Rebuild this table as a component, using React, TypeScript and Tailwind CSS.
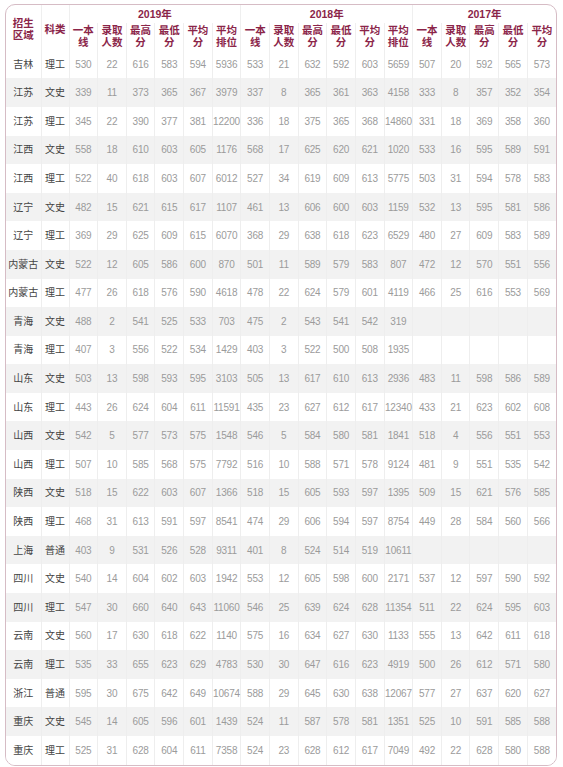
const FONT = '"Liberation Sans", "Noto Sans CJK SC", sans-serif'

type Row = [string, string, ...(number | null)[]]

const rows: Row[] = [
    ['吉林', '理工', 530, 22, 616, 583, 594, 5936, 533, 21, 632, 592, 603, 5659, 507, 20, 592, 565, 573],
    ['江苏', '文史', 339, 11, 373, 365, 367, 3979, 337, 8, 365, 361, 363, 4158, 333, 8, 357, 352, 354],
    ['江苏', '理工', 345, 22, 390, 377, 381, 12200, 336, 18, 375, 365, 368, 14860, 331, 18, 369, 358, 360],
    ['江西', '文史', 558, 18, 610, 603, 605, 1176, 568, 17, 625, 620, 621, 1020, 533, 16, 595, 589, 591],
    ['江西', '理工', 522, 40, 618, 603, 607, 6012, 527, 34, 619, 609, 613, 5775, 503, 31, 594, 578, 583],
    ['辽宁', '文史', 482, 15, 621, 615, 617, 1107, 461, 13, 606, 600, 603, 1159, 532, 13, 595, 581, 586],
    ['辽宁', '理工', 369, 29, 625, 609, 615, 6070, 368, 29, 638, 618, 623, 6529, 480, 27, 609, 583, 589],
    ['内蒙古', '文史', 522, 12, 605, 586, 600, 870, 501, 11, 589, 579, 583, 807, 472, 12, 570, 551, 556],
    ['内蒙古', '理工', 477, 26, 618, 576, 590, 4618, 478, 22, 624, 579, 601, 4119, 466, 25, 616, 553, 569],
    ['青海', '文史', 488, 2, 541, 525, 533, 703, 475, 2, 543, 541, 542, 319],
    ['青海', '理工', 407, 3, 556, 522, 534, 1429, 403, 3, 522, 500, 508, 1935],
    ['山东', '文史', 503, 13, 598, 593, 595, 3103, 505, 13, 617, 610, 613, 2936, 483, 11, 598, 586, 589],
    ['山东', '理工', 443, 26, 624, 604, 611, 11591, 435, 23, 627, 612, 617, 12340, 433, 21, 623, 602, 608],
    ['山西', '文史', 542, 5, 577, 573, 575, 1548, 546, 5, 584, 580, 581, 1841, 518, 4, 556, 551, 553],
    ['山西', '理工', 507, 10, 585, 568, 575, 7792, 516, 10, 588, 571, 578, 9124, 481, 9, 551, 535, 542],
    ['陕西', '文史', 518, 15, 622, 603, 607, 1366, 518, 15, 605, 593, 597, 1395, 509, 15, 621, 576, 585],
    ['陕西', '理工', 468, 31, 613, 591, 597, 8541, 474, 29, 606, 594, 597, 8754, 449, 28, 584, 560, 566],
    ['上海', '普通', 403, 9, 531, 526, 528, 9311, 401, 8, 524, 514, 519, 10611],
    ['四川', '文史', 540, 14, 604, 602, 603, 1942, 553, 12, 605, 598, 600, 2171, 537, 12, 597, 590, 592],
    ['四川', '理工', 547, 30, 660, 640, 643, 11060, 546, 25, 639, 624, 628, 11354, 511, 22, 624, 595, 603],
    ['云南', '文史', 560, 17, 630, 618, 622, 1140, 575, 16, 634, 627, 630, 1133, 555, 13, 642, 611, 618],
    ['云南', '理工', 535, 33, 655, 623, 629, 4783, 530, 30, 647, 616, 623, 4919, 500, 26, 612, 571, 580],
    ['浙江', '普通', 595, 30, 675, 642, 649, 10674, 588, 29, 645, 630, 638, 12067, 577, 27, 637, 620, 627],
    ['重庆', '文史', 545, 14, 605, 596, 601, 1439, 524, 11, 587, 578, 581, 1351, 525, 10, 591, 585, 588],
    ['重庆', '理工', 525, 31, 628, 604, 611, 7358, 524, 23, 628, 612, 617, 7049, 492, 22, 628, 580, 588],
]

// sub header labels, two lines each
const sub6 = [['一本', '线'], ['录取', '人数'], ['最高', '分'], ['最低', '分'], ['平均', '分'], ['平均', '排位']]
const subHeaders = [...sub6, ...sub6, ...sub6.slice(0, 5)]

function HeadCell({ lines }: { lines: string[] }) {
    return (
        <th className="border-l border-[#efefef] p-0 align-middle font-bold text-[10.5px] leading-[12px] text-[#8b2549]">
            {lines.map((l, i) => (
                <div key={i}>{l}</div>
            ))}
        </th>
    )
}

export default function App() {
    return (
        <div className="w-[563px] h-[767px] bg-white pt-[4px] pl-[5px]" style={{ fontFamily: FONT }}>
            <div className="w-[552px] rounded-[10px] border border-[#d6bcc5] overflow-hidden">
                <table className="w-full table-fixed border-collapse text-center">
                    <colgroup>
                        <col className="w-[35px]" />
                        <col className="w-[28px]" />
                        {Array.from({ length: 17 }).map((_, i) => (
                            <col key={i} />
                        ))}
                    </colgroup>
                    <thead>
                        <tr className="h-[17px]">
                            <th rowSpan={2} className="p-0 pt-[4px] align-middle font-bold text-[10.5px] leading-[12px] text-[#8b2549]">
                                <div>招生</div>
                                <div>区域</div>
                            </th>
                            <th rowSpan={2} className="border-l border-[#efefef] p-0 pt-[4px] align-middle font-bold text-[10.5px] text-[#8b2549]">
                                科类
                            </th>
                            <th colSpan={6} className="border-l border-[#efefef] p-0 pt-[2px] font-bold text-[10.5px] text-[#8b2549]">2019年</th>
                            <th colSpan={6} className="border-l border-[#efefef] p-0 pt-[2px] font-bold text-[10.5px] text-[#8b2549]">2018年</th>
                            <th colSpan={5} className="border-l border-[#efefef] p-0 pt-[2px] font-bold text-[10.5px] text-[#8b2549]">2017年</th>
                        </tr>
                        <tr className="h-[27px]">
                            {subHeaders.map((s, i) => (
                                <HeadCell key={i} lines={s} />
                            ))}
                        </tr>
                    </thead>
                    <tbody>
                        {rows.map((r, ri) => {
                            const nums = r.slice(2) as (number | null)[]
                            const cells = Array.from({ length: 17 }).map((_, i) => nums[i] ?? null)
                            return (
                                <tr key={ri} className={`h-[28.6px] ${ri % 2 === 1 ? 'bg-[#f2f2f2]' : 'bg-white'}`}>
                                    <td className="p-0 text-[10px] text-[#444] whitespace-nowrap">{r[0]}</td>
                                    <td className="border-l border-[#eeeeee] p-0 text-[10px] text-[#444]">{r[1]}</td>
                                    {cells.map((v, ci) => (
                                        <td key={ci} className="border-l border-[#eeeeee] p-0 text-[10px] text-[#9b9b9b] tracking-[-0.2px]">
                                            {v ?? ''}
                                        </td>
                                    ))}
                                </tr>
                            )
                        })}
                    </tbody>
                </table>
            </div>
        </div>
    )
}
